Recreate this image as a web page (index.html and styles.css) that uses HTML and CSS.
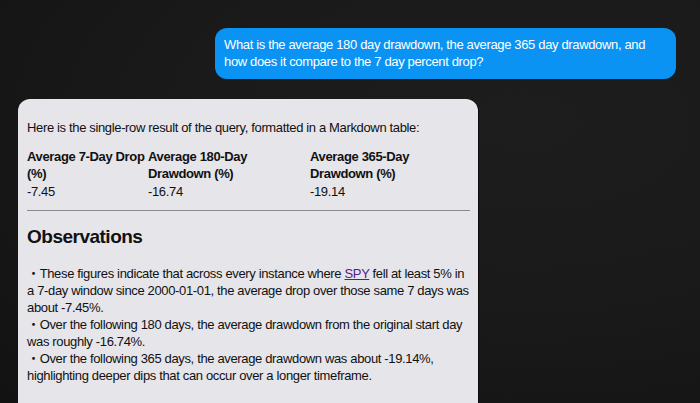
FILE: index.html
```html
<!DOCTYPE html>
<html>
<head>
<meta charset="utf-8">
<link rel="stylesheet" href="styles.css">
</head>
<body>
<div class="chat">
  <div class="bubble">What is the average 180 day drawdown, the average 365 day drawdown, and how does it compare to the 7 day percent drop?</div>
  <div class="card">
    <p class="intro">Here is the single-row result of the query, formatted in a Markdown table:</p>
    <div class="table">
      <div class="th">Average 7-Day Drop (%)</div>
      <div class="th">Average 180-Day Drawdown (%)</div>
      <div class="th">Average 365-Day Drawdown (%)</div>
      <div class="td">-7.45</div>
      <div class="td">-16.74</div>
      <div class="td">-19.14</div>
    </div>
    <hr class="rule">
    <h2 class="heading">Observations</h2>
    <div class="bullets">
      <div class="item">・These figures indicate that across every instance where <a class="link" href="#">SPY</a> fell at least 5% in a 7-day window since 2000-01-01, the average drop over those same 7 days was about -7.45%.</div>
      <div class="item">・Over the following 180 days, the average drawdown from the original start day was roughly -16.74%.</div>
      <div class="item">・Over the following 365 days, the average drawdown was about -19.14%, highlighting deeper dips that can occur over a longer timeframe.</div>
    </div>
  </div>
</div>
</body>
</html>
```

FILE: styles.css
```css
html, body {
  margin: 0;
  height: 100%;
}
body {
  background: radial-gradient(ellipse at 75% 30%, #1d1d1d 0%, #1a1a1a 45%, #121212 100%);
  font-family: "Liberation Sans", Arial, "Noto Sans CJK JP", sans-serif;
  font-size: 13px;
  line-height: 17px;
  letter-spacing: -0.35px;
  overflow: hidden;
}
.chat {
  display: flex;
  flex-direction: column;
  padding-top: 28px;
}
.bubble {
  align-self: flex-end;
  margin-right: 24px;
  width: 443px;
  padding: 8px 9px 9px 9px;
  background: #0a93f2;
  color: #ffffff;
  border-radius: 12px;
}
.card {
  margin: 20px 0 0 18px;
  width: 443px;
  padding: 20px 8px 40px 9px;
  background: #e5e5ea;
  color: #111111;
  border-radius: 12px;
  box-shadow: 1px 0 0 #0c0c0c;
}
.intro {
  margin: 0 0 12px 0;
}
.table {
  display: grid;
  grid-template-columns: 121px 162px 1fr;
  row-gap: 1px;
}
.th {
  font-weight: bold;
}
.rule {
  margin: 10px 0 0 0;
  border: 0;
  border-top: 1px solid #8a8a8e;
  height: 0;
}
.heading {
  margin: 14px 0 16px 0;
  font-size: 19px;
  line-height: 24px;
  font-weight: bold;
  letter-spacing: -0.5px;
}
.item {
  line-height: 17px;
  height: auto;
}
.link {
  color: #551a8b;
  text-decoration: underline;
}
```
